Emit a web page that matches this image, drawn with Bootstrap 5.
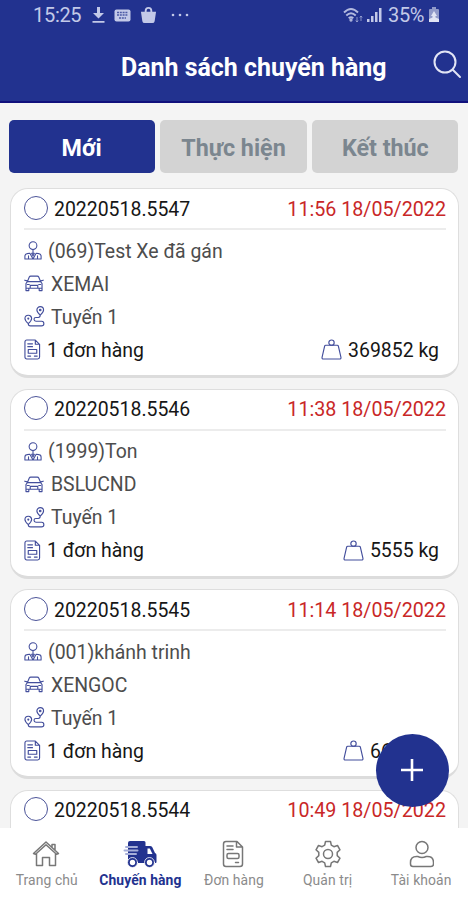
<!DOCTYPE html>
<html lang="vi">
<head>
<meta charset="utf-8">
<meta name="viewport" content="width=device-width, initial-scale=1">
<title>Danh sách chuyến hàng</title>
<link href="https://cdn.jsdelivr.net/npm/bootstrap@5.3.0/dist/css/bootstrap.min.css" rel="stylesheet">
<style>
:root{--navy:#22328f}
body{font-family:Roboto,"Noto Sans",sans-serif;background:#f4f4f4;color:#161616;height:900px;line-height:1}
svg{display:block;flex:none}
.line-icon{fill:none;stroke:#434e9c;stroke-width:1.2;stroke-linejoin:round;stroke-linecap:round;margin-bottom:2px}
.app-screen{height:900px}
.app-head{height:103px;background:var(--navy);border-bottom:2px solid #10107c}
.status{height:30px;padding:0 28px 0 33px;color:#c3c9e8;font-size:20px}
.status .clock{width:48px;letter-spacing:-.3px}
.title-row{height:72px;padding:0 6px 0 121px}
.title-row h1{font-size:24.950px;font-weight:700;line-height:32px;white-space:nowrap}
.tabs{padding:17px 9.5px 15px 8.5px;gap:5.5px}
.tabs .btn{height:53px;border:0;border-radius:5px;font-size:23.3px;font-weight:700;padding:3px 0 0;background:#d3d3d3;color:#7b868f;--bs-btn-active-bg:var(--navy)}
.tabs .btn.active{background:var(--navy);color:#fff}
.trip-list{flex:1 1 0;min-height:0;padding:0 9px 0 10px;gap:10.5px}
.trip{height:190px;flex:none;border:1.5px solid #dedede;border-bottom:3px solid #dcdcdc;border-radius:18px;background:#fff;padding:0 12px 0 13px;font-size:19.45px}
.trip-top{height:41px;border-bottom:2px solid #ececec;padding-top:2px}
.trip-top .ring{width:24px;height:24px;border:1.6px solid #4c5499;border-radius:50%;margin:0 6px 4px 0}
.when{color:#c92727;font-size:19.7px}
.trip-line{height:33px;color:#4d4d4d}
.trip-line.total{color:#161616;padding-right:7px}
.trip-body{padding-top:5px}
.fab{position:absolute;left:376px;top:734px;width:73px;height:73px;border:0;border-radius:50%;background:var(--navy);z-index:2;padding:0 2px 2px 0}
.bottom-nav{height:72px;background:#fff;padding:0}
.bottom-nav a{flex:1 1 0;padding-top:12px;font-size:13.9px;color:#8b8b8b;text-decoration:none;white-space:nowrap;gap:3px;letter-spacing:.1px}
.bottom-nav a svg{fill:none;stroke:#777;stroke-width:1.5;stroke-linejoin:round;stroke-linecap:round}
.bottom-nav a.current{color:var(--navy);font-weight:700}
.bottom-nav a:not(.current) svg{margin-right:2px}
.bottom-nav span{line-height:18px}
</style>
</head>
<body>
<svg width="0" height="0" class="position-absolute" aria-hidden="true">
<symbol id="person" viewBox="0 0 20 22"><circle cx="10" cy="5.5" r="4.3"/><path d="M10 10v4M1 20.500v-3.200q0-2.500 2.500-2.800l3-.5L10 20.500l3.500-6.500 3 .5q2.500.3 2.500 2.800v3.200zM5 17v3.500M15 17v3.500M8.500 14h3L10 17z"/></symbol>
<symbol id="car" viewBox="0 0 21 18"><path d="M3.500 7 5.500 2.200Q6 1.200 7 1.200h7q1 0 1.500 1L17.500 7M3.500 7h14l1.500 2v5H2V9zM.7 5.500l2.500.7M20.300 5.500l-2.500.7M2 14v2.500h3V14M16 14v2.500h3V14M6.500 14v-3h8v3M3.500 10h2M15.500 10h2"/></symbol>
<symbol id="route" viewBox="0 0 22 22"><path d="M4.500 18.500Q1 15.500 1 13.200a3.500 3.500 0 0 1 7 0Q8 15.500 4.500 18.500zM17 9.500q-3.500-3-3.500-5.300a3.500 3.500 0 0 1 7 0Q20.500 6.500 17 9.500zM4.500 18.500q0 2.300 2.300 2.300h11.500q2.500 0 2.500-2.300T18.500 16h-6q-2 0-2-2t2-2H15q2 0 2-2.500"/><circle cx="4.500" cy="13.200" r=".5"/><circle cx="17" cy="4.200" r=".8"/></symbol>
<symbol id="order" viewBox="0 0 18 22"><path d="M3 1h9l4.500 4.500V19q0 2-2 2H3q-2 0-2-2V3q0-2 2-2zM12 1v4.500h4.500M4 5h5M4 8h5M4.500 11h9v4h-9zM11 18h3M4 18h3"/></symbol>
<symbol id="weight" viewBox="0 0 22 22"><circle cx="11" cy="3.800" r="2.800"/><path d="M5 6.500h12q1 0 1.200.9l2.700 11.800q.3 1.800-1.500 1.800H2.600Q.8 21 1.100 19.200L3.800 7.400Q4 6.500 5 6.500z"/></symbol>
</svg>
<main class="app-screen d-flex flex-column position-relative overflow-hidden">
<header class="app-head text-white flex-shrink-0">
<div class="status d-flex align-items-center">
<span class="clock">15:25</span>
<svg style="margin:0 8px 0 10px" width="15" height="18" viewBox="0 0 15 18" fill="#c3c9e8"><path d="M6 1h3v6h4l-5.500 5.500L2 7h4zM1.500 15h12v1.800h-12z"/></svg>
<svg width="17" height="13" viewBox="0 0 17 13"><rect x=".5" y=".5" width="16" height="12" rx="2" fill="#c3c9e8"/><path d="M3 3.500h11M3 6h11M5 9h7" stroke="#4c5aa5" stroke-width="1.300" stroke-dasharray="2 .8"/></svg>
<svg style="margin-left:9px" width="17" height="18" viewBox="0 0 18 19"><path d="M1 6h16l-1.500 10q-.3 2-2.500 2H5q-2.200 0-2.500-2z" fill="#c3c9e8"/><path d="M6 7V5a3 3 0 0 1 6 0v2" fill="none" stroke="#c3c9e8" stroke-width="2"/></svg>
<svg style="margin-left:14px" width="18" height="4" viewBox="0 0 18 4" fill="#c3c9e8"><circle cx="2" cy="2" r="1.300"/><circle cx="9" cy="2" r="1.300"/><circle cx="16" cy="2" r="1.300"/></svg>
<svg class="ms-auto" width="21" height="17" viewBox="0 0 21 17" fill="none" stroke="#b3badf" stroke-width="1.900"><path d="M1 5.500q7-7 14 0M3.300 8.500q4.700-4.500 9.400 0M5.700 11.300q2.300-2 4.600 0"/><circle cx="8" cy="13" r=".7"/><path d="M14 10v5M12.800 13.500 14 15l1.200-1.500M18 14V9M16.800 10.500 18 9l1.200 1.500" stroke-width=".7"/></svg>
<svg style="margin-left:3px" width="15" height="16" viewBox="0 0 15 16" fill="#c3c9e8"><path d="M0 12h2.500v3H0zM4 9h2.500v6H4zM8 5h2.500v10H8zM12 1h2.500v14H12z"/></svg>
<span style="margin-left:6px;letter-spacing:-.4px">35%</span>
<svg style="margin-left:4px" width="12" height="16" viewBox="0 0 12 16"><path d="M4 0h4v2h2q1 0 1 1v11q0 1-1 1H2q-1 0-1-1V3q0-1 1-1h2z" fill="#9099c9"/><path d="M6 4 9 9H7.500v1.500L11 12v3H1v-3l3.500-1.500V9H3z" fill="#e1e4f4"/></svg>
</div>
<div class="title-row d-flex align-items-center justify-content-between">
<h1 class="mb-0 pt-1">Danh sách chuyến hàng</h1>
<svg style="margin-bottom:4px" width="29" height="29" viewBox="0 0 29 29" fill="none" stroke="#e2e5f5" stroke-width="2" stroke-linecap="round"><circle cx="12" cy="12" r="10.500"/><path d="m20 20 7 7"/></svg>
</div>
</header>
<div class="tabs d-flex flex-shrink-0">
<button class="btn active flex-fill w-100">Mới</button>
<button class="btn flex-fill w-100">Thực hiện</button>
<button class="btn flex-fill w-100">Kết thúc</button>
</div>
<section class="trip-list d-flex flex-column overflow-hidden" id="trips"></section>
<button class="fab d-flex align-items-center justify-content-center" aria-label="+"><svg width="24" height="24" viewBox="0 0 24 24" stroke="#fff" stroke-width="2.600"><path d="M12 1v22M1 12h22"/></svg></button>
<nav class="bottom-nav d-flex flex-shrink-0">
<a href="#" class="d-flex flex-column align-items-center"><svg width="28" height="28" viewBox="0 0 28 28"><path d="M1.500 13.500 14 2l12.500 11.500-2 .8L14 4.800 3.500 14.300zM4.500 13.500v12h6v-8h7v8h6v-12M20 7V4.500h3V10"/></svg><span>Trang chủ</span></a>
<a href="#" class="d-flex flex-column align-items-center current"><svg width="34" height="28" viewBox="0 0 34 28"><g stroke="none"><path fill="#22328f" d="M7 1h14q1.500 0 1.500 1.500V6H27q1.500 0 2.300 1.300L32 13q1.500.5 1.500 2v7q0 1-1 1H5V3q0-2 2-2z"/><path fill="#fff" d="M24.500 8.500h2.300L29.500 14h-5z"/><g fill="#22328f" stroke="#fff" stroke-width=".8"><circle cx="9.500" cy="22.500" r="5"/><circle cx="26.500" cy="22.500" r="5"/></g><g fill="#fff"><circle cx="9.500" cy="22.500" r="2.700"/><circle cx="26.500" cy="22.500" r="2.700"/></g></g><path stroke="#a6aed8" stroke-width="2" d="M3 7h11M1.500 10.500h13M3 14h10"/></svg><span>Chuyến hàng</span></a>
<a href="#" class="d-flex flex-column align-items-center"><svg width="22" height="28" viewBox="0 0 22 28"><path d="M4 1.500h11l5.500 5.500v17q0 2.500-2.500 2.500H4Q1.500 26.500 1.500 24V4Q1.500 1.500 4 1.500zM14.500 1.500V7h6M5 6h6M5 9.500h6M6.500 13.500h9q1.500 0 1.500 1.500v2q0 1.500-1.500 1.500h-9Q5 18.500 5 17v-2q0-1.500 1.500-1.500zM13.500 22.500h3"/></svg><span>Đơn hàng</span></a>
<a href="#" class="d-flex flex-column align-items-center"><svg class="me-0" width="28" height="28" viewBox="0 0 28 28"><path d="M11.500 1.500h5l.8 3.700 2.600 1.500 3.600-1.200 2.500 4.300-2.800 2.600v3.200l2.800 2.600-2.500 4.300-3.600-1.200-2.600 1.500-.8 3.700h-5l-.8-3.700-2.600-1.500-3.600 1.200L2 18.200l2.800-2.600v-3.200L2 9.800l2.500-4.300 3.600 1.200 2.600-1.500z"/><circle cx="14" cy="14" r="4.500"/></svg><span>Quản trị</span></a>
<a href="#" class="d-flex flex-column align-items-center"><svg class="me-0" width="26" height="28" viewBox="0 0 26 28"><circle cx="14" cy="7.500" r="6"/><path d="M2.500 24v-1.500q0-6 6-6h1.300q4.200 2 8.400 0h1.300q6 0 6 6V24q0 2.500-2.500 2.500H5Q2.500 26.500 2.500 24z"/></svg><span>Tài khoản</span></a>
</nav>
</main>
<script src="https://cdn.jsdelivr.net/npm/bootstrap@5.3.0/dist/js/bootstrap.bundle.min.js"></script>
<script>
const trips=[
["20220518.5547","11:56 18/05/2022","(069)Test Xe đã gán","XEMAI","369852 kg"],
["20220518.5546","11:38 18/05/2022","(1999)Ton","BSLUCND","5555 kg"],
["20220518.5545","11:14 18/05/2022","(001)khánh trinh","XENGOC","6666 kg"],
["20220518.5544","10:49 18/05/2022","","",""]];
const icon=(n,w,h,m)=>`<svg class="line-icon" style="margin-right:${m}px" width="${w}" height="${h}"><use href="#${n}"/></svg>`;
document.getElementById("trips").innerHTML=trips.map(([id,when,who,car,kg])=>`
<article class="trip">
<div class="trip-top d-flex align-items-center"><span class="ring"></span><span>${id}</span><span class="when ms-auto">${when}</span></div>
${who?`<div class="trip-body">
<div class="trip-line d-flex align-items-center">${icon("person",18,21,6)}<span>${who}</span></div>
<div class="trip-line d-flex align-items-center">${icon("car",20,17,7)}<span>${car}</span></div>
<div class="trip-line d-flex align-items-center">${icon("route",21,21,6)}<span>Tuyến 1</span></div>
<div class="trip-line total d-flex align-items-center">${icon("order",17,21,6)}<span>1 đơn hàng</span><span class="ms-auto d-flex align-items-center">${icon("weight",21,21,6)}<span>${kg}</span></span></div>
</div>`:""}
</article>`).join("");
</script>
</body>
</html>
